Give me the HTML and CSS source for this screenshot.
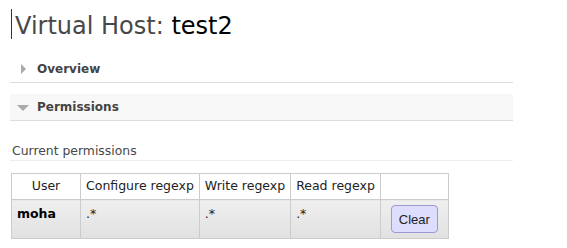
FILE: index.html
```html
<!DOCTYPE html>
<html lang="en">

<head>
    <meta charset="UTF-8">
    <title>RabbitMQ Management - Virtual Host</title>
    <link rel="stylesheet" href="styles.css">
</head>

<body>

    <h1 class="title"><span class="caret"></span>Virtual Host: <b>test2</b></h1>

    <!-- Secciones -->
    <div class="section section-hidden">
        <h2><span class="arrow-right"></span>Overview</h2>
    </div>

    <div class="section section-visible">
        <h2><span class="arrow-down"></span>Permissions</h2>
        <div class="hider">
            <h3>Current permissions</h3>
            <table class="list">
                <tr>
                    <th class="col-user">User</th>
                    <th>Configure regexp</th>
                    <th>Write regexp</th>
                    <th>Read regexp</th>
                    <th class="col-action"></th>
                </tr>
                <tr class="alt1">
                    <td class="user">moha</td>
                    <td>.*</td>
                    <td>.*</td>
                    <td>.*</td>
                    <td class="action"><button type="button">Clear</button></td>
                </tr>
            </table>
        </div>
    </div>

</body>

</html>
```

FILE: styles.css
```css
body {
    font-family: "DejaVu Sans", Verdana, sans-serif;
    font-size: 12px;
    color: #484848;
    margin: 0;
    padding: 0 54px 0 10px;
}

.title {
    position: relative;
    font-size: 24px;
    font-weight: normal;
    margin: 0;
    padding: 12px 0 16px 5px;
    color: #484848;
}

.title b {
    font-weight: normal;
    color: #000;
}

/* cursor de texto */
.caret {
    position: absolute;
    left: 1px;
    top: 9px;
    width: 1px;
    height: 30px;
    background: #333;
}

.section h2 {
    font-size: 12px;
    font-weight: bold;
    color: #444;
    margin: 0;
    padding: 6px 0 6px 27px;
    border-bottom: 1px solid #ddd;
    position: relative;
}

.section-visible h2 {
    background-color: #f8f8f8;
    margin-top: 11px;
}

.arrow-right {
    position: absolute;
    left: 11px;
    top: 8px;
    width: 0;
    height: 0;
    border-top: 5px solid transparent;
    border-bottom: 5px solid transparent;
    border-left: 5px solid #aaa;
}

.arrow-down {
    position: absolute;
    left: 7px;
    top: 11px;
    width: 0;
    height: 0;
    border-left: 6px solid transparent;
    border-right: 6px solid transparent;
    border-top: 6px solid #aaa;
}

.hider h3 {
    font-size: 12.4px;
    font-weight: normal;
    color: #484848;
    margin: 22px 0 12px 0;
    padding: 0 0 2px 2px;
    border-bottom: 1px solid #eee;
}

table.list {
    border-collapse: collapse;
    margin-left: 1px;
}

table.list th,
table.list td {
    border: 1px solid #ccc;
    font-size: 12.5px;
    text-align: left;
    vertical-align: top;
    color: #222;
}

table.list th {
    font-weight: normal;
    padding: 4px 5px 5px 5px;
    height: 16px;
}

table.list th.col-user {
    text-align: center;
    width: 58px;
}

table.list th.col-action {
    width: 57px;
}

table.list td {
    padding: 6px 5px;
    height: 26px;
    background: linear-gradient(#efefef, #e1e1e1);
}

table.list td.user {
    font-weight: bold;
    color: #000;
}

table.list td.action {
    text-align: center;
    vertical-align: middle;
    padding: 0;
}

button {
    font-family: "Liberation Sans", Arial, sans-serif;
    font-size: 13px;
    color: #222;
    background-color: #ddddfd;
    border: 1px solid #9b99d8;
    border-radius: 4px;
    height: 28px;
    padding: 0 7px;
    cursor: pointer;
}
```
